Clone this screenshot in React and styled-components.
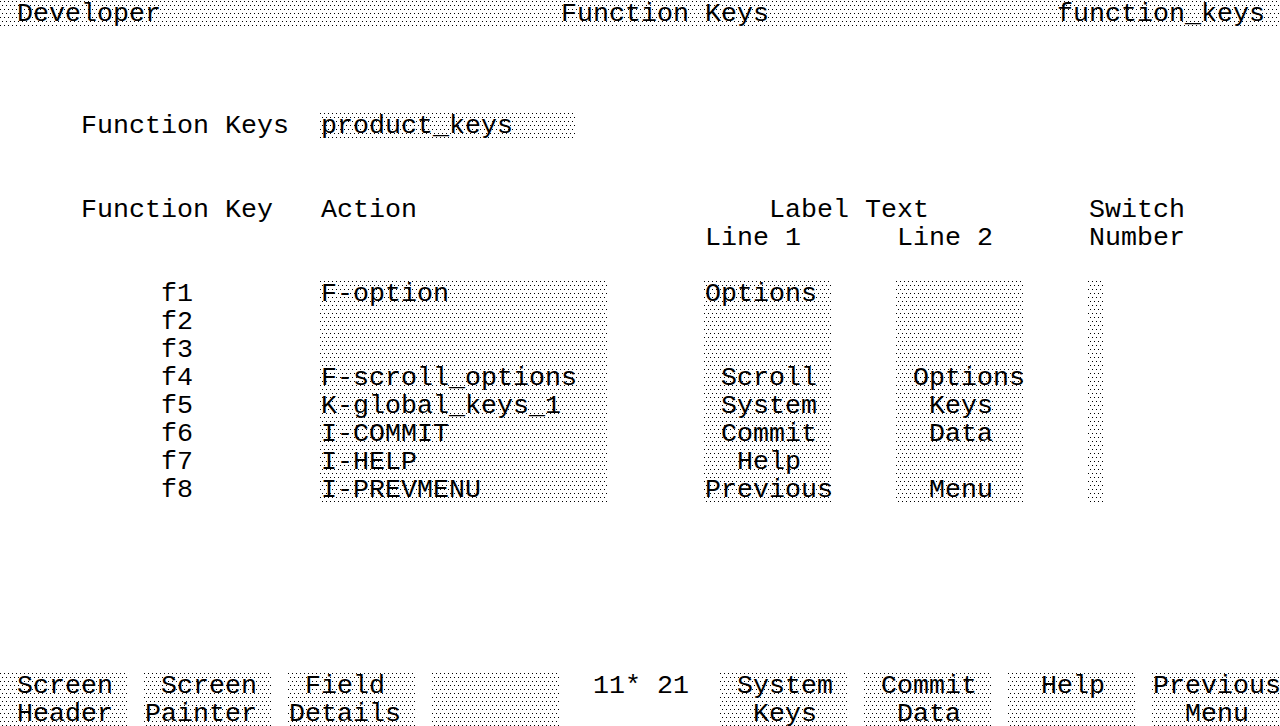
import React from 'react'
import styled, { createGlobalStyle } from 'styled-components'

const GlobalStyle = createGlobalStyle`
  html, body {
    margin: 0;
    padding: 0;
    background: #fff;
  }
  body {
    overflow: hidden;
  }
`

// the light dotted fill that the terminal uses for fields and the title line
const stipple = `
  background-color: #fff;
  background-image:
    conic-gradient(at 1px 1px, transparent 75%, #000 0),
    conic-gradient(at 1px 1px, transparent 75%, #000 0);
  background-size: 4px 8px;
  background-position: 0 1px, 2px 5px;
  background-attachment: fixed;
`

const Screen = styled.div`
  width: 1280px;
  height: 726px;
  overflow: hidden;
  display: grid;
  grid-template-columns: repeat(80, 16px);
  grid-template-rows: repeat(26, 28px);
  font-family: "Liberation Mono", "DejaVu Sans Mono", monospace;
  font-size: 26.67px;
  line-height: 28px;
  color: #000;
  white-space: pre;
`

const TitleBar = styled.div`
  grid-column: 1 / -1;
  grid-row: 1;
  display: grid;
  grid-template-columns: subgrid;
  ${stipple}
`

const Text = styled.div`
  grid-column: ${p => p.$col + 1} / span ${p => p.$span || 1};
  grid-row: ${p => (p.$row != null ? p.$row + 1 : 'auto')};
  padding-left: 1px;
`

const Field = styled.div`
  grid-column: ${p => p.$col + 1} / span ${p => p.$width};
  grid-row: ${p => p.$row + 1} / span ${p => p.$rows || 1};
  ${stipple}
`

const FieldLine = styled.div`
  height: 28px;
  padding-left: ${p => (p.$indent || 0) * 16 + 1}px;
`

const SoftKey = styled.div`
  grid-column: ${p => p.$col + 1} / span 8;
  grid-row: 25 / span 2;
  ${stipple}
`

const actions = [
  'F-option',
  '',
  '',
  'F-scroll_options',
  'K-global_keys_1',
  'I-COMMIT',
  'I-HELP',
  'I-PREVMENU',
]

const line1 = [
  ['Options', 0],
  ['', 0],
  ['', 0],
  ['Scroll', 1],
  ['System', 1],
  ['Commit', 1],
  ['Help', 2],
  ['Previous', 0],
]

const line2 = [
  ['', 0],
  ['', 0],
  ['', 0],
  ['Options', 1],
  ['Keys', 2],
  ['Data', 2],
  ['', 0],
  ['Menu', 2],
]

const softKeys = [
  { col: 0, lines: [['Screen', 1], ['Header', 1]] },
  { col: 9, lines: [['Screen', 1], ['Painter', 0]] },
  { col: 18, lines: [['Field', 1], ['Details', 0]] },
  { col: 27, lines: [] },
  { col: 45, lines: [['System', 1], ['Keys', 2]] },
  { col: 54, lines: [['Commit', 1], ['Data', 2]] },
  { col: 63, lines: [['Help', 2]] },
  { col: 72, lines: [['Previous', 0], ['Menu', 2]] },
]

export default function App() {
  return (
    <Screen>
      <GlobalStyle />

      <TitleBar>
        <Text $col={1}>Developer</Text>
        <Text $col={35}>Function Keys</Text>
        <Text $col={66}>function_keys</Text>
      </TitleBar>

      <Text $col={5} $row={4}>Function Keys</Text>
      <Field $col={20} $width={16} $row={4}>
        <FieldLine>product_keys</FieldLine>
      </Field>

      <Text $col={5} $row={7}>Function Key</Text>
      <Text $col={20} $row={7}>Action</Text>
      <Text $col={48} $row={7}>Label Text</Text>
      <Text $col={68} $row={7}>Switch</Text>
      <Text $col={44} $row={8}>Line 1</Text>
      <Text $col={56} $row={8}>Line 2</Text>
      <Text $col={68} $row={8}>Number</Text>

      {actions.map((_, i) => (
        <Text key={i} $col={10} $row={10 + i}>{`f${i + 1}`}</Text>
      ))}

      <Field $col={20} $width={18} $row={10} $rows={8}>
        {actions.map((a, i) => (
          <FieldLine key={i}>{a}</FieldLine>
        ))}
      </Field>

      <Field $col={44} $width={8} $row={10} $rows={8}>
        {line1.map(([t, ind], i) => (
          <FieldLine key={i} $indent={ind}>{t}</FieldLine>
        ))}
      </Field>

      <Field $col={56} $width={8} $row={10} $rows={8}>
        {line2.map(([t, ind], i) => (
          <FieldLine key={i} $indent={ind}>{t}</FieldLine>
        ))}
      </Field>

      <Field $col={68} $width={1} $row={10} $rows={8} />

      {softKeys.map(k => (
        <SoftKey key={k.col} $col={k.col}>
          {k.lines.map(([t, ind], i) => (
            <FieldLine key={i} $indent={ind}>{t}</FieldLine>
          ))}
        </SoftKey>
      ))}

      <Text $col={37} $row={24}>11* 21</Text>
    </Screen>
  )
}
